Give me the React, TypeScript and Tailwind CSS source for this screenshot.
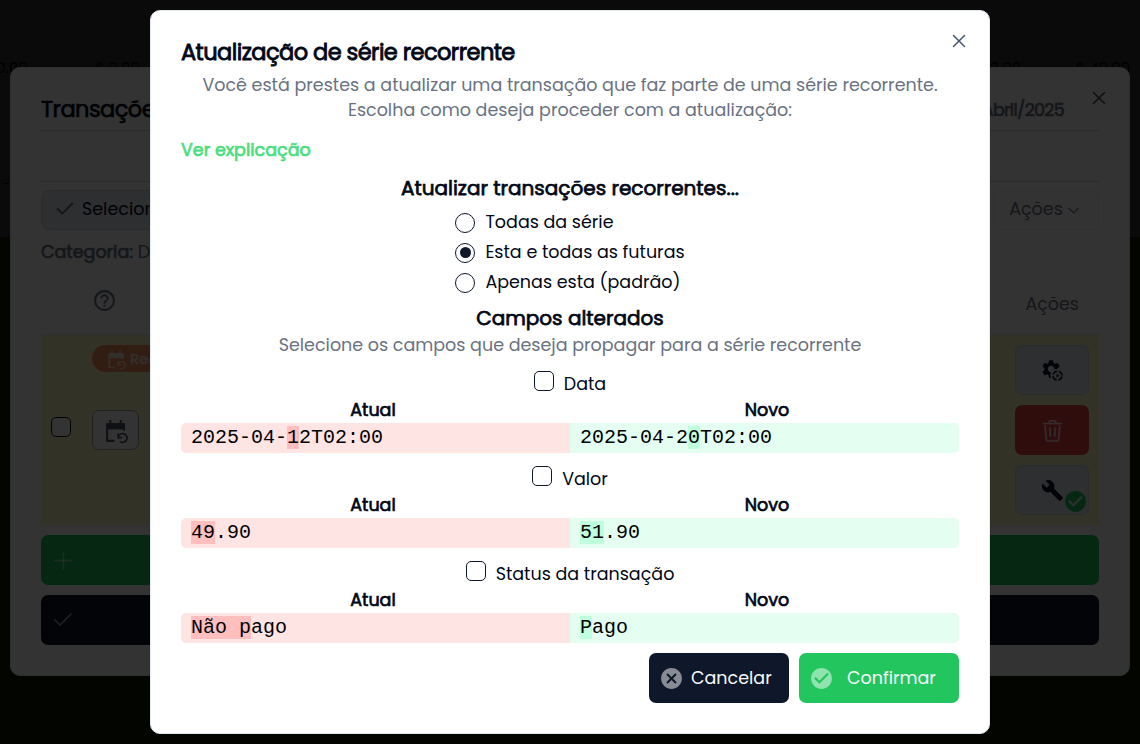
import type { ReactNode } from "react";
import { GoTrash } from "react-icons/go";
import { MdBuild, MdCancel, MdCheckCircle, MdHelpOutline, MdSettings } from "react-icons/md";
import { Check, ChevronDown, Plus, X } from "lucide-react";

const font = "font-['Poppins','Inter',sans-serif]";
const stroke = "[-webkit-text-stroke:0.7px_currentColor]";

function CalendarRestore({ className }: { className: string }) {
  return (
    <svg viewBox="0 0 24 24" className={className} fill="none" stroke="currentColor">
      <path d="M3 4h18v6H3z" fill="currentColor" stroke="none" />
      <path d="M7 1v4M17 1v4" strokeWidth="2" />
      <path d="M20 11V5H4v16h7" strokeWidth="2" strokeLinejoin="round" />
      <path d="M14.500 18.800a4.300 4.300 0 1 1 1.700 2.900M14.500 14v3.800h3.800" strokeWidth="1.600" />
    </svg>
  );
}

function CogPlay({ className }: { className: string }) {
  return (
    <svg viewBox="0 0 24 24" className={className} fill="none" stroke="currentColor">
      <mask id="cog-cutout">
        <path d="M0 0h24v24H0z" fill="white" stroke="none" />
        <circle cx="17.500" cy="17.800" r="7.200" fill="black" stroke="none" />
      </mask>
      <g mask="url(#cog-cutout)">
        <MdSettings x="-1" y="-1" size={24} />
      </g>
      <circle cx="18" cy="18.200" r="4.900" strokeWidth="1.700" strokeDasharray="5.850 1.850" strokeDashoffset="-0.900" />
      <path d="m17 16 3 2.200-3 2.200z" fill="currentColor" stroke="none" />
    </svg>
  );
}

function Radio({ label, checked }: { label: string; checked?: boolean }) {
  return (
    <label className="flex h-5 items-center gap-2.5">
      <span className="flex size-5 shrink-0 items-center justify-center rounded-full border border-slate-900">
        {checked && <span className="size-[11px] rounded-full bg-slate-900" />}
      </span>
      <span className="-mt-0.5 leading-5">{label}</span>
    </label>
  );
}

function Mark({ tone, children }: { tone: "old" | "new"; children: ReactNode }) {
  return <span className={tone === "old" ? "bg-[#ffbfbf]" : "bg-[#bfffdd]"}>{children}</span>;
}

function Field({ label, before, after }: { label: string; before: ReactNode; after: ReactNode }) {
  return (
    <section className="h-[95px]">
      <label className="flex h-[27px] justify-center gap-2.5">
        <span className="size-5 shrink-0 rounded-[5px] border border-slate-900" />
        <span className="leading-[27px]">{label}</span>
      </label>
      <div className={`grid h-[25px] grid-cols-2 gap-2.5 text-center leading-[25px] ${stroke}`}>
        <span>Atual</span>
        <span>Novo</span>
      </div>
      <div className="grid h-[30px] grid-cols-2 overflow-hidden rounded-[5px] font-['Liberation_Mono',monospace] text-[20px] leading-[30px] text-black">
        <div className="bg-[#ffe4e4] pl-2.5">{before}</div>
        <div className="bg-[#e4fff1] pl-2.5">{after}</div>
      </div>
    </section>
  );
}

function Backdrop() {
  return (
    <div className="absolute inset-0 bg-[#131d08]">
      <div className="h-[237px] bg-[#333]">
        <div className="h-[47px] border-b border-[#2d2d2d]" />
        <div className="flex h-[41px] items-center justify-between border-b border-[#2d2d2d] text-[15px] text-black">
          <div className="flex">
            <span className="-ml-[17px] w-28">$ 0.00</span>
            <span>$ 0.00</span>
          </div>
          <div className="flex h-full items-center">
            <span>$ 0.00</span>
            <span className="ml-7 flex h-full w-[91px] items-center justify-center border-l border-[#2d2d2d] pl-4">$ 49.90</span>
          </div>
        </div>
        <div className="mt-[95px] ml-[3px] h-px w-1.5 bg-black" />
      </div>
    </div>
  );
}

function TransactionsDialog() {
  return (
    <div className="absolute top-[67px] left-2.5 h-[609px] w-[1120px] rounded-[10px] border border-slate-200 bg-white px-[30px] pt-[30px]">
      <X className="absolute top-[19px] right-[19px] size-[22px] text-[#4d4d4d]" strokeWidth={1.7} />
      <div className="flex h-[33px] items-start justify-between border-b border-slate-300 pr-[35px]">
        <h2 className={`text-[22.5px] leading-[22.5px] tracking-[-0.025em] ${stroke}`}>Transações</h2>
        <span className={`text-[17.5px] leading-[25px] tracking-[-0.04em] text-gray-500 ${stroke}`}>Abril/2025</span>
      </div>
      <div className="h-[51px] border-b border-slate-300" />
      <div className="mt-2 flex justify-between">
        <div className="flex h-10 w-[300px] items-center gap-1.5 rounded-[8px] border border-slate-300 bg-slate-200 pb-0.5 pl-3 text-slate-950">
          <Check className="size-[22px] text-gray-500" strokeWidth={2} />
          Selecionar
        </div>
        <div className="flex h-10 w-[106px] items-center justify-center gap-[1px] rounded-[8px] border border-[#ededed] pb-0.5 text-gray-500">
          Ações
          <ChevronDown className="mt-0.5 size-[19px]" strokeWidth={1.6} />
        </div>
      </div>
      <div className="mt-[10px] h-[25px] text-gray-500">
        <b className={`font-normal ${stroke}`}>Categoria:</b> Dízimo
      </div>
      <div className="flex h-[69px] items-center justify-between pt-[2px] pr-5 pl-[51px] text-gray-500">
        <MdHelpOutline className="size-[25px]" />
        <span className="pt-[7px]">Ações</span>
      </div>
      <div className="flex h-[191px] justify-between border-t border-slate-200 bg-yellow-100 px-2.5 pt-2.5">
        <div className="flex">
          <span className="mt-[72px] size-5 rounded-[5px] border border-slate-900 bg-white" />
          <div className="ml-[21px]">
            <div className="flex h-[27px] w-[130px] items-center gap-1 rounded-full bg-[#fb8f5c] pl-3.5 text-[15px] text-white/70">
              <CalendarRestore className="mt-0.5 size-5" />
              <span className="[-webkit-text-stroke:0.6px_currentColor]">Recorrente</span>
            </div>
            <div className="mt-[38px] flex h-10 w-[47px] items-center justify-center rounded-[7px] border border-gray-400 bg-white text-gray-600">
              <CalendarRestore className="mt-0.5 size-[25px]" />
            </div>
          </div>
        </div>
        <div className="flex w-[74px] flex-col gap-2.5">
          <div className="flex h-[50px] items-center justify-center rounded-[7px] border border-slate-300 bg-slate-200 text-slate-900">
            <CogPlay className="size-[22px]" />
          </div>
          <div className="flex h-[50px] items-center justify-center rounded-[7px] bg-[#ef4444] text-white/80">
            <GoTrash className="mt-0.5 size-[23px] stroke-[0.3]" />
          </div>
          <div className="relative flex h-[50px] items-center justify-center rounded-[7px] border border-slate-300 bg-slate-200 text-slate-900">
            <MdBuild className="size-[23px]" />
            <MdCheckCircle className="absolute right-0 bottom-0 size-[25px] text-[#22c55e]" />
          </div>
        </div>
      </div>
      <div className="mt-2.5 flex h-[50px] items-center rounded-[7px] bg-[#22c55e] pl-[8px] text-white/50">
        <Plus className="size-[29px]" strokeWidth={1.2} />
      </div>
      <div className="mt-2.5 flex h-[50px] items-center rounded-[7px] bg-slate-900 pl-[10px] text-white/60">
        <Check className="size-[24px]" strokeWidth={1.6} />
      </div>
    </div>
  );
}

export default function App() {
  return (
    <main className={`relative h-[744px] w-[1140px] overflow-hidden text-[17.5px] leading-[25px] text-[#020817] ${font}`}>
      <Backdrop />
      <TransactionsDialog />
      <div className="absolute inset-0 bg-black/80" />
      <div className="absolute top-2.5 left-[150px] h-[724px] w-[840px] rounded-[10px] border border-slate-200 bg-white px-[30px] pt-[30px]">
        <X className="absolute top-[19px] right-[19px] size-[22px] text-slate-600" strokeWidth={1.6} />
        <h1 className="text-[22.5px] leading-[22.5px] tracking-[-0.025em] [-webkit-text-stroke:0.85px_currentColor]">
          Atualização de série recorrente
        </h1>
        <p className="mt-[9px] text-center text-gray-500">
          Você está prestes a atualizar uma transação que faz parte de uma série recorrente.
          <br />
          Escolha como deseja proceder com a atualização:
        </p>
        <div className={`mt-[15px] text-[#4ade80] ${stroke}`}>Ver explicação</div>
        <h2 className="mt-[11px] text-center text-[20px] leading-[28px] [-webkit-text-stroke:0.75px_currentColor]">
          Atualizar transações recorrentes...
        </h2>
        <div className="mt-[11px] flex justify-center">
          <div className="flex flex-col gap-2.5">
            <Radio label="Todas da série" />
            <Radio label="Esta e todas as futuras" checked />
            <Radio label="Apenas esta (padrão)" />
          </div>
        </div>
        <h2 className="mt-[11px] text-center text-[20px] leading-[28px] [-webkit-text-stroke:0.75px_currentColor]">
          Campos alterados
        </h2>
        <p className="mt-px text-center text-gray-500">Selecione os campos que deseja propagar para a série recorrente</p>
        <div className="mt-[13px]">
          <Field
            label="Data"
            before={<>2025-04-<Mark tone="old">1</Mark>2T02:00</>}
            after={<>2025-04-2<Mark tone="new">0</Mark>T02:00</>}
          />
          <Field label="Valor" before={<><Mark tone="old">49</Mark>.90</>} after={<><Mark tone="new">51</Mark>.90</>} />
          <Field
            label="Status da transação"
            before={<><Mark tone="old">Não p</Mark>ago</>}
            after={<><Mark tone="new">P</Mark>ago</>}
          />
        </div>
        <div className="-mt-[3px] flex justify-end gap-2.5">
          <button className="flex h-[50px] w-[140px] items-center gap-[7px] rounded-[7px] bg-slate-900 pt-0.5 pl-2.5 text-slate-50">
            <MdCancel className="size-[25px] text-[#888b94]" />
            Cancelar
          </button>
          <button className="flex h-[50px] w-[160px] items-center gap-[13px] rounded-[7px] bg-[#22c55e] pt-0.5 pl-2.5 text-slate-50">
            <MdCheckCircle className="size-[25px] text-[#90e2ae]" />
            Confirmar
          </button>
        </div>
      </div>
    </main>
  );
}
